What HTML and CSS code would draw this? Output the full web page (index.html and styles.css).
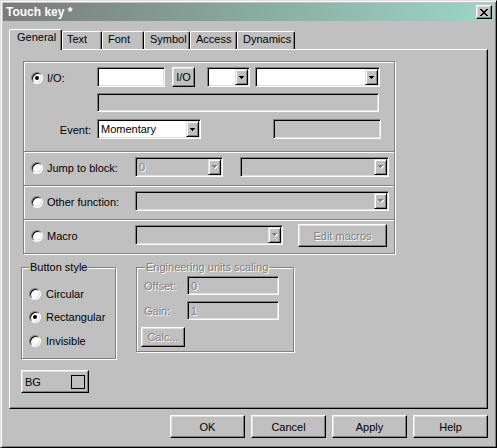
FILE: index.html
```html
<!DOCTYPE html>
<html>
<head>
<meta charset="utf-8">
<title>Touch key</title>
<link rel="stylesheet" href="styles.css">
</head>
<body>
<div class="window">
  <div class="titlebar">
    <span class="title">Touch key *</span>
    <span class="close-btn"><svg width="8" height="7" viewBox="0 0 8 7" shape-rendering="crispEdges"><path d="M0 0h2v1H0zM6 0h2v1H6zM1 1h2v1H1zM5 1h2v1H5zM2 2h4v1H2zM3 3h2v1H3zM2 4h4v1H2zM1 5h2v1H1zM5 5h2v1H5zM0 6h2v1H0zM6 6h2v1H6z" fill="#000"/></svg></span>
  </div>
  <div class="client">
    <div class="tabs">
      <div class="tab active tab-general">General</div>
      <div class="tab tab-text">Text</div>
      <div class="tab tab-font">Font</div>
      <div class="tab tab-symbol">Symbol</div>
      <div class="tab tab-access">Access</div>
      <div class="tab tab-dynamics">Dynamics</div>
    </div>
    <div class="panel">
      <div class="iogroup etch">
        <div class="io-main">
          <div class="line">
            <div class="opt opt-io"><span class="radio on"></span><span class="lbl">I/O:</span></div>
            <span class="field io-tag"></span>
            <span class="btn io-btn">I/O</span>
            <div class="combo combo-small">
              <span class="combo-text"></span>
              <span class="combo-arrow"><svg width="5" height="3" viewBox="0 0 5 3" shape-rendering="crispEdges"><path d="M0 0h5v1H0zM1 1h3v1H1zM2 2h1v1H2z" fill="#000"/></svg></span>
            </div>
            <div class="combo combo-conn">
              <span class="combo-text"></span>
              <span class="combo-arrow"><svg width="5" height="3" viewBox="0 0 5 3" shape-rendering="crispEdges"><path d="M0 0h5v1H0zM1 1h3v1H1zM2 2h1v1H2z" fill="#000"/></svg></span>
            </div>
          </div>
          <div class="line-desc"><span class="field gray desc-field"></span></div>
          <div class="line-event">
            <span class="ev-label">Event:</span>
            <div class="combo combo-event">
              <span class="combo-text">Momentary</span>
              <span class="combo-arrow"><svg width="5" height="3" viewBox="0 0 5 3" shape-rendering="crispEdges"><path d="M0 0h5v1H0zM1 1h3v1H1zM2 2h1v1H2z" fill="#000"/></svg></span>
            </div>
            <span class="field gray ev-field"></span>
          </div>
        </div>
        <div class="iorow">
          <div class="opt opt-wide"><span class="radio"></span><span class="lbl">Jump to block:</span></div>
          <div class="combo gray combo-jump">
            <span class="combo-text dis">0</span>
            <span class="combo-arrow"><svg width="6" height="4" viewBox="0 0 6 4" shape-rendering="crispEdges"><path d="M1 1h5v1H1zM2 2h3v1H2zM3 3h1v1H3z" fill="#fff"/><path d="M0 0h5v1H0zM1 1h3v1H1zM2 2h1v1H2z" fill="#808080"/></svg></span>
          </div>
          <div class="combo gray combo-jump2">
            <span class="combo-text"></span>
            <span class="combo-arrow"><svg width="6" height="4" viewBox="0 0 6 4" shape-rendering="crispEdges"><path d="M1 1h5v1H1zM2 2h3v1H2zM3 3h1v1H3z" fill="#fff"/><path d="M0 0h5v1H0zM1 1h3v1H1zM2 2h1v1H2z" fill="#808080"/></svg></span>
          </div>
        </div>
        <div class="iorow">
          <div class="opt opt-wide"><span class="radio"></span><span class="lbl">Other function:</span></div>
          <div class="combo gray combo-other">
            <span class="combo-text"></span>
            <span class="combo-arrow"><svg width="6" height="4" viewBox="0 0 6 4" shape-rendering="crispEdges"><path d="M1 1h5v1H1zM2 2h3v1H2zM3 3h1v1H3z" fill="#fff"/><path d="M0 0h5v1H0zM1 1h3v1H1zM2 2h1v1H2z" fill="#808080"/></svg></span>
          </div>
        </div>
        <div class="iorow">
          <div class="opt opt-wide"><span class="radio"></span><span class="lbl">Macro</span></div>
          <div class="combo gray combo-macro">
            <span class="combo-text"></span>
            <span class="combo-arrow"><svg width="6" height="4" viewBox="0 0 6 4" shape-rendering="crispEdges"><path d="M1 1h5v1H1zM2 2h3v1H2zM3 3h1v1H3z" fill="#fff"/><path d="M0 0h5v1H0zM1 1h3v1H1zM2 2h1v1H2z" fill="#808080"/></svg></span>
          </div>
          <span class="btn edit-btn dis">Edit macros</span>
        </div>
      </div>

      <div class="lower">
        <div class="stylegroup etch">
          <span class="legend">Button style</span>
          <div class="radioline rl-1"><span class="radio"></span><span class="rlabel">Circular</span></div>
          <div class="radioline rl-2"><span class="radio on"></span><span class="rlabel">Rectangular</span></div>
          <div class="radioline rl-3"><span class="radio"></span><span class="rlabel">Invisible</span></div>
        </div>
        <div class="enggroup etch">
          <span class="legend dis">Engineering units scaling</span>
          <div class="engline el-1"><span class="englabel dis">Offset:</span><span class="field gray eng-field"><span class="dis">0</span></span></div>
          <div class="engline el-2"><span class="englabel dis">Gain:</span><span class="field gray eng-field"><span class="dis">1</span></span></div>
          <span class="btn calc-btn dis">Calc...</span>
        </div>
      </div>

      <div class="btn bg-btn"><span>BG</span><span class="swatch"></span></div>
    </div>
    <div class="footer">
      <span class="btn foot-btn">OK</span>
      <span class="btn foot-btn">Cancel</span>
      <span class="btn foot-btn">Apply</span>
      <span class="btn foot-btn">Help</span>
    </div>
  </div>
</div>
</body>
</html>
```
FILE: styles.css
```css
* { box-sizing: border-box; }
html, body { margin: 0; padding: 0; background: #c0c0c0; }
body {
  font-family: "Liberation Sans", Arial, sans-serif;
  font-size: 11px;
  color: #000;
}

.window {
  width: 497px;
  height: 448px;
  border: 1px solid;
  border-color: #dfdfdf #000 #000 #dfdfdf;
  box-shadow: inset 1px 1px #fff, inset -1px -1px #808080;
  padding: 2px;
  background: #c0c0c0;
}

.titlebar {
  height: 18px;
  display: flex;
  align-items: center;
  justify-content: space-between;
  padding: 0 2px 0 3px;
  background: linear-gradient(90deg, #7b7b7b 0%, #88aa9f 50%, #9dd6c5 100%);
}
.title {
  color: #fff;
  font-weight: bold;
  font-size: 12px;
  line-height: 14px;
}
.close-btn {
  width: 16px;
  height: 14px;
  display: flex;
  align-items: center;
  justify-content: center;
  background: #c0c0c0;
  border: 1px solid;
  border-color: #fff #000 #000 #fff;
  box-shadow: inset -1px -1px #808080, inset 1px 1px #dfdfdf;
}
.close-btn svg { display: block; }

.client { padding: 8px 0 0 6px; }

.tabs {
  display: flex;
  align-items: flex-end;
  height: 20px;
}
.tab {
  height: 18px;
  border: 1px solid;
  border-bottom: none;
  border-color: #fff #000 #000 #fff;
  border-radius: 2px 2px 0 0;
  box-shadow: inset -1px 0 #808080;
  padding: 1px 0 0 4px;
  line-height: 13px;
  white-space: nowrap;
  background: #c0c0c0;
}
.tab.active {
  height: 21px;
  margin-bottom: -1px;
  position: relative;
  z-index: 1;
  padding-left: 7px;
}
.tab-general { width: 53px; }
.tab-text { width: 40px; }
.tab-font { width: 42px; padding-left: 5px; }
.tab-symbol { width: 46px; padding-left: 5px; }
.tab-access { width: 47px; padding-left: 5px; }
.tab-dynamics { width: 58px; padding-left: 5px; }

.panel {
  width: 479px;
  height: 360px;
  border: 1px solid;
  border-color: #fff #000 #000 #fff;
  box-shadow: inset -1px -1px #808080;
  padding: 11px 0 0 11px;
}

.etch {
  border: 1px solid #808080;
  box-shadow: inset 1px 1px #fff, 1px 1px #fff;
}

.dis { color: #808080; text-shadow: 1px 1px #fff; }

/* generic controls */
.radio {
  width: 12px;
  height: 12px;
  flex: none;
  border-radius: 50%;
  border: 1px solid;
  border-color: #808080 #fff #fff #808080;
  box-shadow: inset 1px 1px #000, inset -1px -1px #dfdfdf;
  background: #fff;
  display: flex;
  align-items: center;
  justify-content: center;
}
.radio.on::after {
  content: "";
  width: 4px;
  height: 4px;
  border-radius: 50%;
  background: #000;
}

.field {
  display: flex;
  align-items: center;
  padding-left: 2px;
  border: 1px solid;
  border-color: #808080 #fff #fff #808080;
  box-shadow: inset 1px 1px #000, inset -1px -1px #dfdfdf;
  background: #fff;
  flex: none;
}
.field.gray { background: #c0c0c0; }

.btn {
  display: flex;
  align-items: center;
  justify-content: center;
  border: 1px solid;
  border-color: #fff #000 #000 #fff;
  box-shadow: inset -1px -1px #808080, inset 1px 1px #dfdfdf;
  background: #c0c0c0;
  white-space: nowrap;
  flex: none;
}

.combo {
  display: flex;
  align-items: center;
  height: 20px;
  padding: 1px;
  border: 1px solid;
  border-color: #808080 #fff #fff #808080;
  box-shadow: inset 1px 1px #000, inset -1px -1px #dfdfdf;
  background: #fff;
  flex: none;
}
.combo.gray { background: #c0c0c0; }
.combo-text {
  flex: 1;
  padding-left: 2px;
  line-height: 16px;
  white-space: nowrap;
  overflow: hidden;
}
.combo-arrow {
  width: 13px;
  height: 16px;
  flex: none;
  display: flex;
  align-items: center;
  justify-content: center;
  border: 1px solid;
  border-color: #dfdfdf #000 #000 #dfdfdf;
  box-shadow: inset 1px 1px #fff, inset -1px -1px #808080;
  background: #c0c0c0;
}
.combo-arrow svg { display: block; }

/* I/O group */
.iogroup { width: 372px; margin-left: 2px; }
.io-main { height: 89px; padding-top: 5px; }
.line { display: flex; height: 20px; }
.opt {
  display: flex;
  align-items: center;
  padding-top: 2px;
  flex: none;
}
.opt .radio { margin-left: 7px; }
.opt .lbl { margin-left: 4px; white-space: nowrap; }
.opt-io { width: 73px; }
.opt-wide { width: 111px; height: 20px; }

.io-tag { width: 68px; height: 20px; }
.io-btn { width: 23px; height: 20px; margin-left: 7px; }
.combo-small { width: 43px; margin-left: 12px; }
.combo-conn { width: 125px; margin-left: 5px; }

.line-desc { margin-top: 6px; padding-left: 73px; display: flex; }
.desc-field { width: 282px; height: 19px; }

.line-event { margin-top: 7px; display: flex; height: 20px; }
.ev-label {
  width: 73px;
  padding-right: 6px;
  text-align: right;
  line-height: 20px;
  padding-top: 1px;
}
.combo-event { width: 104px; }
.ev-field { width: 108px; height: 20px; margin-left: 72px; }

.iorow {
  height: 34px;
  border-top: 1px solid #808080;
  box-shadow: inset 0 1px #fff;
  padding-top: 5px;
  display: flex;
  align-items: flex-start;
}
.combo-jump { width: 88px; }
.combo-jump2 { width: 149px; margin-left: 17px; }
.combo-other { width: 254px; }
.combo-macro { width: 148px; }
.edit-btn { width: 89px; height: 23px; margin-left: 15px; margin-top: -1px; }

/* lower groups */
.lower {
  display: flex;
  align-items: flex-start;
  margin-top: 13px;
}
.legend {
  margin: -7px 0 0 7px;
  padding: 0 1px;
  background: #c0c0c0;
  line-height: 13px;
  white-space: nowrap;
  align-self: flex-start;
}
.stylegroup {
  width: 95px;
  height: 92px;
  display: flex;
  flex-direction: column;
}
.radioline { display: flex; align-items: center; height: 16px; }
.radioline .radio { margin-left: 7px; }
.rlabel { margin-left: 5px; }
.rl-1 { margin-top: 12px; }
.rl-2 { margin-top: 7px; }
.rl-3 { margin-top: 8px; }

.enggroup {
  width: 158px;
  height: 85px;
  margin-left: 20px;
  display: flex;
  flex-direction: column;
}
.enggroup .legend { margin-left: 8px; }
.engline { display: flex; align-items: center; height: 19px; }
.el-1 { margin-top: 2px; }
.el-2 { margin-top: 6px; }
.englabel { width: 50px; padding-left: 7px; }
.eng-field { width: 92px; height: 19px; padding-left: 3px; }
.calc-btn { width: 44px; height: 20px; margin: 7px 0 0 4px; align-self: flex-start; }

.bg-btn {
  width: 68px;
  height: 23px;
  margin-top: 11px;
  justify-content: space-between;
  padding: 0 3px 0 3px;
}
.swatch {
  width: 14px;
  height: 14px;
  border: 1px solid #000;
  background: #c0c0c0;
}

.footer {
  display: flex;
  justify-content: flex-end;
  gap: 6px;
  width: 479px;
  margin-top: 6px;
}
.foot-btn { width: 75px; height: 23px; }
```
